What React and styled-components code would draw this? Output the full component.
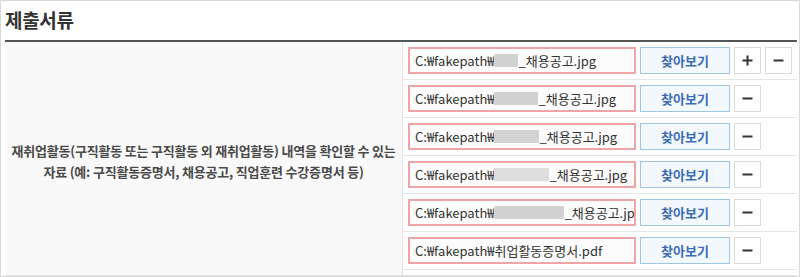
import React from "react";
import styled, { createGlobalStyle } from "styled-components";

const GlobalStyle = createGlobalStyle`
	html, body {
		margin: 0;
		padding: 0;
		background: #fff;
	}
	body {
		font-family: "Noto Sans CJK KR", "Noto Sans", sans-serif;
	}
	* {
		box-sizing: border-box;
	}
`;

const Frame = styled.div`
	width: 800px;
	height: 277px;
	border: 1px solid #d9d9d9;
	padding: 0 2px 0 4px;
	overflow: hidden;
`;

const Title = styled.h2`
	margin: 0;
	height: 39px;
	display: flex;
	align-items: center;
	padding-bottom: 2px;
	font-size: 19px;
	font-weight: 700;
	color: #333;
	letter-spacing: -0.3px;
`;

const Table = styled.div`
	display: grid;
	grid-template-columns: 398px 1fr;
	border-top: 2px solid #555;
	border-bottom: 1px solid #e4e4e4;
`;

const LabelCell = styled.div`
	background: #f9f9f9;
	border-right: 1px solid #e4e4e4;
	display: flex;
	align-items: center;
	justify-content: center;
	text-align: center;
	padding: 4px 0 0;
	font-size: 13px;
	font-weight: 700;
	line-height: 21px;
	color: #4a4a4a;
	letter-spacing: -0.2px;
	white-space: nowrap;
`;

const FileCell = styled.div`
	padding-bottom: 5px;
`;

const FileRow = styled.div`
	display: flex;
	align-items: center;
	gap: 4px;
	padding: 5px 5px;
	border-bottom: 1px solid #e6e6e6;
`;

const PathBox = styled.div`
	width: 228px;
	height: 27px;
	border: 2px solid #efa4a6;
	background: #fcfcfc;
	display: flex;
	align-items: center;
	padding-left: 5px;
	font-size: 13px;
	color: #333;
	white-space: nowrap;
	overflow: hidden;
`;

const Redacted = styled.span`
	display: inline-block;
	width: ${props => props.w}px;
	height: 13px;
	background: ${props => props.light ? "#dedede" : "#d2d2d2"};
	flex-shrink: 0;
`;

const FindButton = styled.button`
	width: 90px;
	height: 27px;
	border: 1px solid #9ec4e6;
	background: #f3f8fd;
	color: #3b6db3;
	font-family: inherit;
	font-size: 13px;
	font-weight: 700;
	padding: 0;
	cursor: pointer;
	flex-shrink: 0;
`;

const SquareButton = styled.button`
	width: 27px;
	height: 27px;
	border: 1px solid #dcdcdc;
	background: #fff;
	padding: 0;
	display: flex;
	align-items: center;
	justify-content: center;
	cursor: pointer;
	flex-shrink: 0;
`;

const PlusIcon = () => (
	<svg width="11" height="11" viewBox="0 0 11 11">
		<path d="M5.5 0.5v10M0.5 5.5h10" stroke="#333" strokeWidth="2" />
	</svg>
);

const MinusIcon = () => (
	<svg width="11" height="11" viewBox="0 0 11 11">
		<path d="M0.5 5.5h10" stroke="#333" strokeWidth="2" />
	</svg>
);

const files = [
	{ redact: 24, name: "_채용공고.jpg", plus: true },
	{ redact: 44, name: "_채용공고.jpg" },
	{ redact: 45, name: "_채용공고.jpg" },
	{ redact: 55, name: "_채용공고.jpg", light: true },
	{ redact: 70, name: "_채용공고.jpg" },
	{ redact: 0, name: "취업활동증명서.pdf" },
];

const App = () => {
	return (
		<>
			<GlobalStyle />
			<Frame>
				<Title>제출서류</Title>
				<Table>
					<LabelCell>
						재취업활동(구직활동 또는 구직활동 외 재취업활동) 내역을 확인할 수 있는
						<br />
						자료 (예: 구직활동증명서, 채용공고, 직업훈련 수강증명서 등)
					</LabelCell>
					<FileCell>
						{files.map((f, i) => (
							<FileRow key={i}>
								<PathBox>
									C:₩fakepath₩
									{f.redact > 0 && <Redacted w={f.redact} light={f.light} />}
									{f.name}
								</PathBox>
								<FindButton>찾아보기</FindButton>
								{f.plus && (
									<SquareButton>
										<PlusIcon />
									</SquareButton>
								)}
								<SquareButton>
									<MinusIcon />
								</SquareButton>
							</FileRow>
						))}
					</FileCell>
				</Table>
			</Frame>
		</>
	);
};

export default App;
